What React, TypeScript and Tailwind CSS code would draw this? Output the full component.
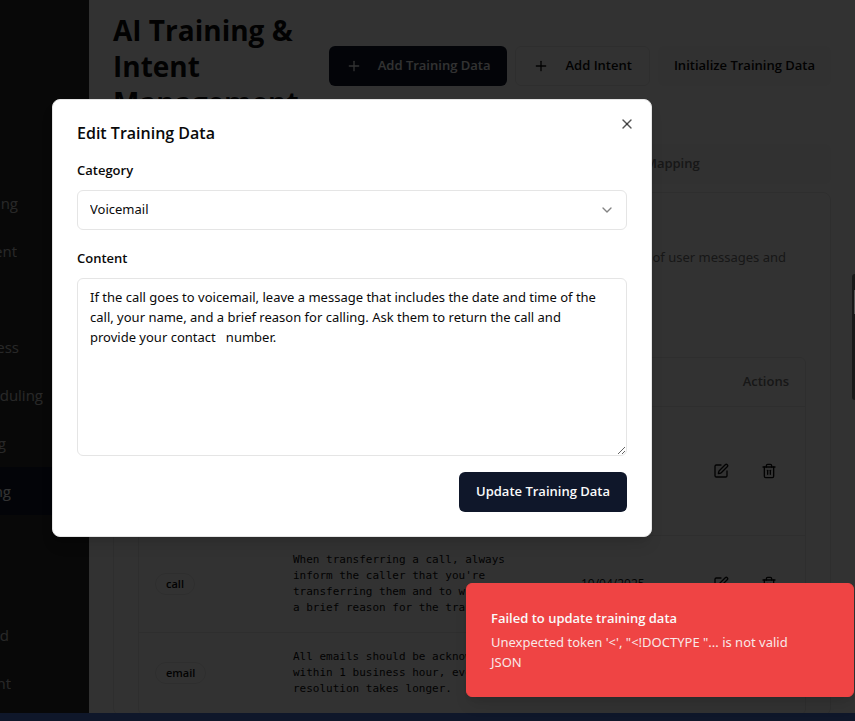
import { ChevronDown, Plus, SquarePen, Trash2, X } from "lucide-react";

const navItems = [
  { label: "ng", width: "w-[18px]" },
  { label: "ent", width: "w-[17px]" },
  { label: "", width: "w-0" },
  { label: "ess", width: "w-[19px]" },
  { label: "duling", width: "w-[43px]" },
  { label: "g", width: "w-[6px]" },
  { label: "ng", width: "w-[11px]", active: true },
  { label: "", width: "w-0" },
  { label: "", width: "w-0" },
  { label: "d", width: "w-[9px]" },
  { label: "nt", width: "w-[11px]" },
];

const rows = [
  {
    category: "voicemail",
    content:
      "If the call goes to voicemail,\nleave a message that includes the\ndate and time of the call, your\nname, and a brief reason for\ncalling. Ask them to return the\ncall.",
    updated: "10/04/2025",
  },
  {
    category: "call",
    content:
      "When transferring a call, always\ninform the caller that you're\ntransferring them and to whom, and\na brief reason for the transfer.",
    updated: "10/04/2025",
  },
  {
    category: "email",
    content:
      "All emails should be acknowledged\nwithin 1 business hour, even if\nresolution takes longer.",
    updated: "10/04/2025",
  },
];

function Sidebar() {
  return (
    <nav className="w-[89px] shrink-0 overflow-hidden bg-[#282828] pt-[179px]">
      {navItems.map((item, i) => (
        <div
          key={i}
          className={`flex h-12 items-center text-[15px] ${
            item.active ? "bg-[#0f172a] text-white" : "text-[#c8c8c8]"
          }`}
        >
          <a href="#" className={`flex justify-end overflow-hidden ${item.width}`}>
            {item.label}
          </a>
        </div>
      ))}
    </nav>
  );
}

function TrainingTable() {
  return (
    <div className="overflow-hidden rounded-md border border-[#e5e5e5]">
      <table className="w-full table-fixed text-[13px]">
        <thead>
          <tr className="h-12 border-b border-[#e5e5e5] text-left text-[#737373]">
            <th className="w-[138px] px-4 font-semibold">Category</th>
            <th className="w-[288px] px-4 font-semibold">Content</th>
            <th className="px-4 font-semibold">Updated</th>
            <th className="w-[120px] px-4 text-right font-semibold">Actions</th>
          </tr>
        </thead>
        <tbody>
          {rows.map((row) => (
            <tr key={row.category} className="border-b border-[#e5e5e5]">
              <td className="px-4">
                <span className="inline-flex rounded-full border border-[#e5e5e5] px-2.5 py-0.5 text-[11px] leading-4 font-semibold">
                  {row.category}
                </span>
              </td>
              <td className="p-4">
                <p className="font-['DejaVu_Sans_Mono',monospace] text-[11px] leading-4 whitespace-pre">
                  {row.content}
                </p>
              </td>
              <td className="px-4 text-xs">{row.updated}</td>
              <td className="px-4">
                <div className="flex justify-end gap-2">
                  <button aria-label="Edit" className="flex h-9 w-10 items-center justify-center">
                    <SquarePen size={16} />
                  </button>
                  <button aria-label="Delete" className="flex h-9 w-10 items-center justify-center">
                    <Trash2 size={16} />
                  </button>
                </div>
              </td>
            </tr>
          ))}
        </tbody>
      </table>
    </div>
  );
}

function EditDialog() {
  return (
    <div
      role="dialog"
      aria-labelledby="dialog-title"
      className="relative flex w-full max-w-[600px] flex-col gap-4 rounded-lg border border-[#e5e5e5] bg-white p-6 shadow-lg"
    >
      <h2 id="dialog-title" className="text-base leading-[18px] font-semibold">
        Edit Training Data
      </h2>
      <button aria-label="Close" className="absolute top-4 right-4 text-[#0a0a0a]/70">
        <X size={16} />
      </button>
      <div className="flex flex-col gap-2">
        <label htmlFor="category" className="text-[13px] leading-6 font-semibold">
          Category
        </label>
        <div className="relative">
          <select
            id="category"
            className="h-10 w-full appearance-none rounded-md border border-[#e5e5e5] bg-white px-3 font-['Noto_Sans',sans-serif] text-[13px]"
          >
            <option>Voicemail</option>
          </select>
          <ChevronDown size={16} className="pointer-events-none absolute top-3 right-3 opacity-50" />
        </div>
      </div>
      <div className="flex flex-col gap-2">
        <label htmlFor="content" className="text-[13px] leading-6 font-semibold">
          Content
        </label>
        <textarea
          id="content"
          className="h-[178px] w-full rounded-md border border-[#e5e5e5] py-2 pr-6 pl-3 font-['Noto_Sans',sans-serif] text-[13px] leading-5"
          defaultValue="If the call goes to voicemail, leave a message that includes the date and time of the call, your name, and a brief reason for calling. Ask them to return the call and provide your contact   number."
        />
      </div>
      <div className="flex justify-end">
        <button className="h-10 rounded-md bg-[#0f172a] px-[17px] text-[13px] font-semibold text-[#fafafa]">
          Update Training Data
        </button>
      </div>
    </div>
  );
}

export default function App() {
  return (
    <div className="relative flex h-screen flex-col overflow-hidden font-['Open_Sans','Noto_Sans',sans-serif] text-[#0a0a0a]">
      <div className="relative flex min-h-0 flex-1 overflow-hidden">
        <Sidebar />
        <main className="min-w-0 flex-1 overflow-hidden bg-[#fafafa] px-6 pt-3">
          <header className="flex items-center justify-between gap-2">
            <h1 className="text-[28px] leading-9 font-bold">AI Training &amp; Intent Management</h1>
            <div className="flex shrink-0 gap-2 text-[13px] font-semibold">
              <button className="flex h-10 items-center gap-4 rounded-md bg-[#0f172a] px-[17px] text-[#fafafa]">
                <Plus size={16} />
                Add Training Data
              </button>
              <button className="flex h-10 items-center gap-4 rounded-md border border-[#e5e5e5] px-[17px]">
                <Plus size={16} />
                Add Intent
              </button>
              <button className="h-10 rounded-md bg-[#f3f3f3] px-4">Initialize Training Data</button>
            </div>
          </header>
          <div className="mt-6 grid h-10 grid-cols-2 items-center rounded-md bg-[#f3f3f3] text-center text-[13px] font-semibold text-[#737373]">
            <button>Training Data</button>
            <button>Intent Mapping</button>
          </div>
          <section className="mt-2 rounded-lg border border-[#e5e5e5] px-6 pt-6">
            <h3 className="text-2xl leading-6 font-semibold">Training Data</h3>
            <p className="mt-1.5 h-[110px] pr-5 text-right font-['Noto_Sans',sans-serif] text-[13px] leading-5 text-[#737373]">
              Manage the examples of user messages and
            </p>
            <TrainingTable />
          </section>
        </main>
        <div className="absolute inset-0 flex items-start bg-black/80 px-[52px] pt-[99px]">
          <EditDialog />
        </div>
        <div className="absolute top-[274px] right-0 flex h-[126px] w-[3px] items-start justify-end rounded-l-sm bg-[#191919] pt-4">
          <div className="h-6 w-px bg-[#555]" />
        </div>
      </div>
      <div className="h-2 shrink-0 bg-[#0f172a]" />
      <div
        role="alert"
        className="absolute right-px bottom-6 w-[388px] rounded-md border border-[#ef4444] bg-[#ef4444] p-6 pr-8 text-[13px] leading-5 text-[#fafafa] shadow-lg"
      >
        <p className="font-semibold">Failed to update training data</p>
        <p className="mt-1 font-['Noto_Sans',sans-serif] opacity-90">
          Unexpected token '&lt;', "&lt;!DOCTYPE "... is not valid JSON
        </p>
      </div>
    </div>
  );
}
